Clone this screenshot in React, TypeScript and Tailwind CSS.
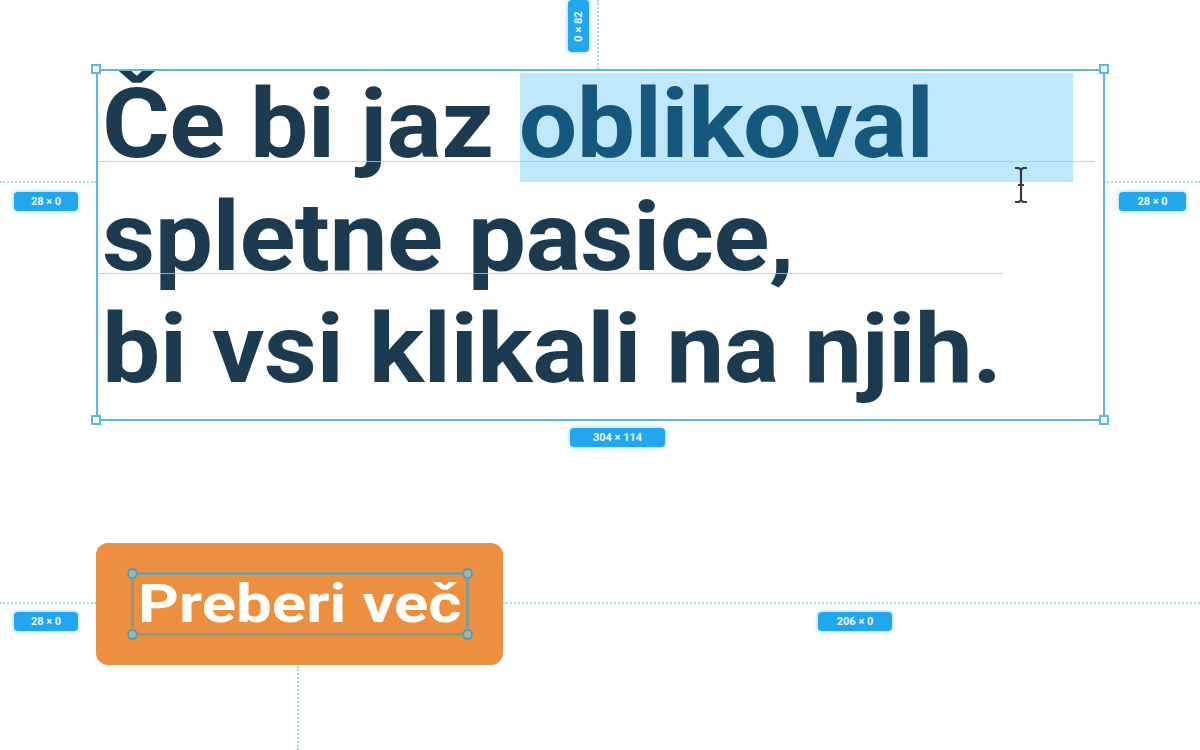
const font = { fontFamily: "Roboto, 'Liberation Sans', sans-serif" };

function Tag({ children, className }: { children: React.ReactNode; className: string }) {
  return (
    <div
      className={`absolute flex items-center justify-center rounded-[4px] bg-[#22a7ee] text-[11px] font-bold leading-none text-white/90 shadow-[0_0_4px_rgba(34,167,238,0.6)] ${className}`}
      style={font}
    >
      {children}
    </div>
  );
}

function Handle({ className }: { className: string }) {
  return <div className={`absolute h-[10px] w-[10px] border-2 border-[#58b9ea] bg-white ${className}`} />;
}

function Dot({ className }: { className: string }) {
  return <div className={`absolute h-[11px] w-[11px] rounded-full border-2 border-[#5f9aa0] bg-[#9cb7b2] ${className}`} />;
}

export default function App() {
  return (
    <div className="relative h-[750px] w-[1200px] overflow-hidden bg-white" style={font}>
      {/* spacing guides */}
      <div className="absolute left-0 top-[181px] w-[96px] border-t-2 border-dotted border-[#a6d8f2]" />
      <div className="absolute left-[1104px] top-[181px] w-[96px] border-t-2 border-dotted border-[#a6d8f2]" />
      <div className="absolute left-[597px] top-0 h-[69px] border-l-2 border-dotted border-[#a6d8f2]" />
      <div className="absolute left-0 top-[602px] w-[96px] border-t-2 border-dotted border-[#a6d8f2]" />
      <div className="absolute left-[503px] top-[602px] w-[697px] border-t-2 border-dotted border-[#a6d8f2]" />
      <div className="absolute left-[297px] top-[666px] h-[84px] border-l-2 border-dotted border-[#a6d8f2]" />

      {/* text selection highlight */}
      <div className="absolute left-[520px] top-[73px] h-[109px] w-[553px] bg-[#bfe8fc]" />

      {/* heading */}
      <h1 className="absolute left-[102px] top-[68px] origin-left scale-x-[1.08] whitespace-nowrap text-[96px] font-bold leading-[112.5px] tracking-[-0.5px] text-[#1c3a50]">
        Če bi jaz <span className="text-[#14587d]">oblikoval</span>
        <br />
        spletne pasice,
        <br />
        bi vsi klikali na njih.
      </h1>

      {/* baseline guides */}
      <div className="absolute left-[96px] top-[161px] w-[999px] border-t border-[#92d1f1]/80" />
      <div className="absolute left-[96px] top-[273px] w-[907px] border-t border-[#92d1f1]/80" />

      {/* selected frame */}
      <div className="absolute left-[96px] top-[69px] h-[352px] w-[1009px] border-2 border-[#5ab8e8]" />
      <Handle className="left-[91px] top-[64px]" />
      <Handle className="left-[1099px] top-[64px]" />
      <Handle className="left-[91px] top-[415px]" />
      <Handle className="left-[1099px] top-[415px]" />

      {/* text cursor */}
      <svg className="absolute left-[1012px] top-[166px]" width="18" height="38" viewBox="0 0 18 38">
        <path d="M3 2h4l2 2 2-2h4M9 4v30M3 36h4l2-2 2 2h4M6 19h6" stroke="#3a3a3a" strokeWidth="2.2" fill="none" />
      </svg>

      {/* button */}
      <div className="absolute left-[96px] top-[543px] flex h-[122px] w-[407px] items-center justify-center rounded-[12px] bg-[#ec8f41]">
        <div className="relative flex h-[64px] w-[338px] items-center justify-center border-[3px] border-[#8a9a90]">
          <span className="scale-x-[1.2] whitespace-nowrap text-[53px] font-bold leading-none text-[#fffdf8]">Preberi več</span>
          <Dot className="-left-[7px] -top-[7px]" />
          <Dot className="-right-[7px] -top-[7px]" />
          <Dot className="-bottom-[7px] -left-[7px]" />
          <Dot className="-bottom-[7px] -right-[7px]" />
        </div>
      </div>

      {/* dimension tags */}
      <Tag className="left-[568px] top-0 h-[52px] w-[21px]">
        <span className="-rotate-90 whitespace-nowrap">0 × 82</span>
      </Tag>
      <Tag className="left-[14px] top-[192px] h-[19px] w-[64px]">28 × 0</Tag>
      <Tag className="left-[1119px] top-[192px] h-[19px] w-[67px]">28 × 0</Tag>
      <Tag className="left-[570px] top-[428px] h-[19px] w-[95px]">304 × 114</Tag>
      <Tag className="left-[14px] top-[612px] h-[19px] w-[64px]">28 × 0</Tag>
      <Tag className="left-[818px] top-[612px] h-[19px] w-[74px]">206 × 0</Tag>
    </div>
  );
}
